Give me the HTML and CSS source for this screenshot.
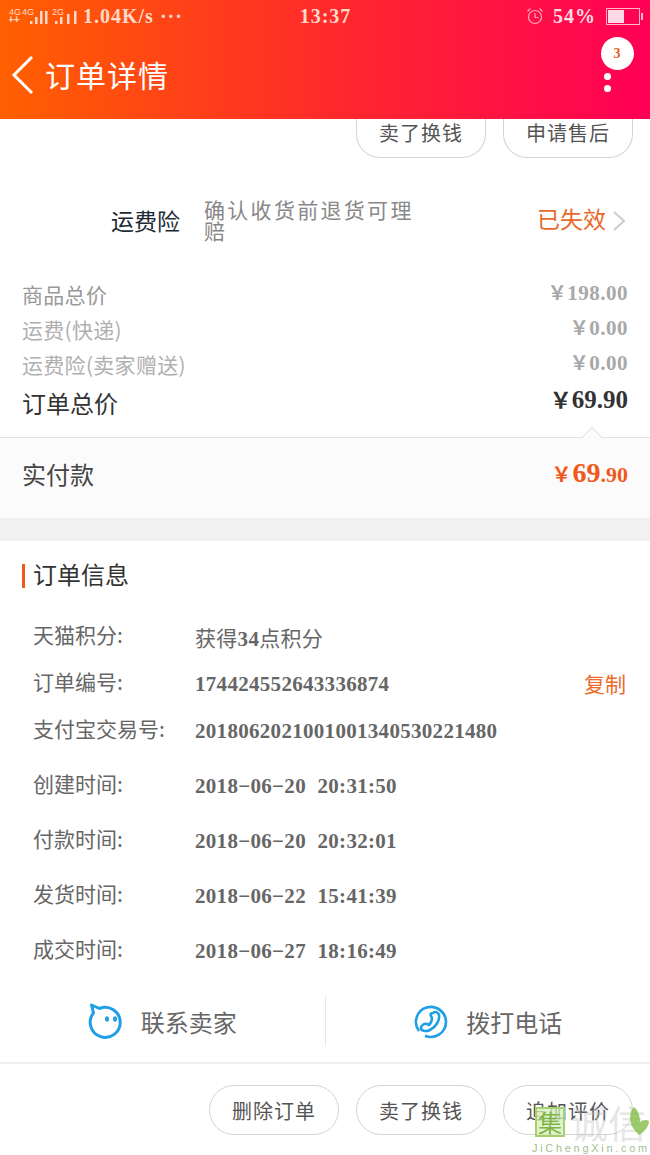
FILE: index.html
```html
<!DOCTYPE html>
<html lang="zh-CN">
<head>
  <meta charset="UTF-8" />
  <meta name="viewport" content="width=device-width, initial-scale=1.0"/>
  <title>订单详情</title>
  <link rel="stylesheet" href="styles.css">
</head>
<body>

  <div class="page">
    <header class="topbar">
      <div class="status">
        <div class="status-left">
          <svg class="signal" width="68" height="24" viewBox="0 0 68 24" fill="#ffd9c9">
            <text x="0" y="10" font-size="9" font-family="Liberation Sans">4G</text>
            <text x="13" y="10" font-size="9" font-family="Liberation Sans">4G</text>
            <text x="-1" y="18" font-size="10" font-weight="bold" font-family="Liberation Sans">++</text>
            <rect x="21" y="16" width="2.500" height="3"/><rect x="26" y="12" width="2.500" height="7"/><rect x="31" y="6" width="2.500" height="13"/><rect x="36" y="6" width="2.500" height="13"/>
            <text x="43" y="10" font-size="9" font-family="Liberation Sans">2G</text>
            <rect x="46" y="16" width="2.500" height="3"/><rect x="51" y="12" width="2.500" height="7"/><rect x="58" y="9" width="2.500" height="10"/><rect x="65" y="6" width="2.500" height="13"/>
          </svg>
          <span class="speed">1.04K/s ···</span>
        </div>
        <span class="clock">13:37</span>
        <div class="status-right">
          <svg width="18" height="18" viewBox="0 0 18 18" fill="none" stroke="#fff" stroke-width="1.200" opacity=".75">
            <circle cx="9" cy="10" r="6.500"/><path d="M9 6v4.500h3.500M1.500 4.500l3-3M16.500 4.500l-3-3"/>
          </svg>
          <span class="pct">54%</span>
          <div class="battery"><div class="battery-fill"></div></div>
        </div>
      </div>
      <div class="navbar">
        <svg class="back" width="24" height="40" viewBox="0 0 24 40" fill="none" stroke="#fff" stroke-width="3">
          <path d="M21 2 3 20l18 18"/>
        </svg>
        <h1>订单详情</h1>
        <div class="more">
          <span class="badge">3</span>
          <i></i><i></i>
        </div>
      </div>
    </header>

    <div class="btn-row btn-row-top">
      <span class="pill">卖了换钱</span>
      <span class="pill">申请售后</span>
    </div>

    <div class="insure">
      <span class="insure-name">运费险</span>
      <span class="insure-desc">确认收货前退货可理赔</span>
      <span class="insure-state">已失效</span>
      <svg width="14" height="24" viewBox="0 0 14 24" fill="none" stroke="#ccc" stroke-width="2"><path d="m2 3 10 9-10 9"/></svg>
    </div>

    <div class="prices">
      <div class="price-row"><span>商品总价</span><b><em>&#xFFE5;</em>198.00</b></div>
      <div class="price-row light"><span>运费(快递)</span><b><em>&#xFFE5;</em>0.00</b></div>
      <div class="price-row light"><span>运费险(卖家赠送)</span><b><em>&#xFFE5;</em>0.00</b></div>
      <div class="price-row total"><span>订单总价</span><b><em>&#xFFE5;</em>69.90</b></div>
    </div>

    <div class="paid">
      <span class="paid-label">实付款</span>
      <b class="paid-sum"><em>&#xFFE5;</em>69<small>.90</small></b>
    </div>

    <div class="gap"></div>

    <section class="info">
      <h2>订单信息</h2>
      <div class="info-row r1"><span class="key">天猫积分:</span><span class="val"><span class="cjk">获得</span>34<span class="cjk">点积分</span></span></div>
      <div class="info-row r2"><span class="key">订单编号:</span><span class="val">174424552643336874</span><span class="copy">复制</span></div>
      <div class="info-row r3"><span class="key">支付宝交易号:</span><span class="val">2018062021001001340530221480</span></div>
      <div class="info-row r4"><span class="key">创建时间:</span><span class="val">2018−06−20 20:31:50</span></div>
      <div class="info-row r4"><span class="key">付款时间:</span><span class="val">2018−06−20 20:32:01</span></div>
      <div class="info-row r4"><span class="key">发货时间:</span><span class="val">2018−06−22 15:41:39</span></div>
      <div class="info-row r4"><span class="key">成交时间:</span><span class="val">2018−06−27 18:16:49</span></div>
    </section>

    <div class="contact">
      <div class="contact-item">
        <svg width="36" height="38" viewBox="0 0 36 38" fill="none" stroke="#1e9fe6" stroke-width="3">
          <path d="M5.500 11 3.500 3l8 3.500A15 15 0 1 1 5.500 11Z" stroke-linejoin="round"/>
          <ellipse cx="19" cy="17" rx="2" ry="2.800" fill="#1e9fe6" stroke="none"/>
          <ellipse cx="27" cy="17" rx="2" ry="2.800" fill="#1e9fe6" stroke="none"/>
        </svg>
        <span>联系卖家</span>
      </div>
      <div class="contact-item">
        <svg width="36" height="38" viewBox="0 0 36 38" fill="none" stroke="#1e9fe6" stroke-width="2.600">
          <path d="M6 29A15 15 0 1 1 12 33.700"/>
          <path d="M20 11c2-2 5-1 6 2 1 5-3 12-9 15-4 2-9 1-9-2 0-3 4-5 6-4l2 1c2-2 3-4 3-7l-1-2c-1-2 0-3 2-3Z"/>
        </svg>
        <span>拨打电话</span>
      </div>
    </div>

    <div class="btn-row btn-row-bottom">
      <span class="pill">删除订单</span>
      <span class="pill">卖了换钱</span>
      <span class="pill">追加评价</span>
    </div>

    <div class="watermark">
      <div class="wm-top">
        <span class="wm-logo">集</span>
        <span class="wm-name">诚信</span>
        <svg class="wm-leaf" width="20" height="30" viewBox="0 0 20 30" fill="#8cc152" opacity=".85">
          <path d="M5 1C0 6 0 15 4 22c2 3 4 5 6 7 5-3 10-8 10-14-3-2-7-1-9 1C11 10 9 4 5 1Z"/>
        </svg>
      </div>
      <span class="wm-url">JiChengXin.com</span>
    </div>
  </div>

</body>
</html>
```

FILE: styles.css
```css
* {
  box-sizing: border-box;
}

body {
  margin: 0;
  background: #fff;
  font-family: "Noto Sans CJK SC", "Liberation Serif", sans-serif;
}

.page {
  position: relative;
  width: 650px;
  height: 1155px;
  overflow: hidden;
}

b, .val, .speed, .clock, .pct {
  font-family: "Liberation Serif", "Noto Sans CJK SC", serif;
  font-weight: bold;
}

em {
  font-style: normal;
}

.cjk {
  font-family: "Noto Sans CJK SC", sans-serif;
  font-weight: normal;
}

.topbar {
  height: 119px;
  background: linear-gradient(to right, #ff6000, #ff2a2a 50%, #ff0055);
  color: #fff;
}

.status {
  height: 32px;
  padding: 0 8px 0 9px;
  display: flex;
  align-items: center;
  justify-content: space-between;
}

.status-left, .status-right {
  width: 240px;
  display: flex;
  align-items: center;
  gap: 6px;
}

.status-right {
  justify-content: flex-end;
  opacity: .85;
}

.speed, .clock, .pct {
  font-size: 20px;
  letter-spacing: 1px;
  color: #ffd9c9;
}

.pct {
  color: #fff;
  margin: 0 4px 0 3px;
}

.signal {
  margin-top: 1px;
}

.battery {
  position: relative;
  width: 34px;
  height: 17px;
  border: 1px solid #ffd5dd;
  padding: 1px;
  margin-right: 2px;
}

.battery::after {
  content: "";
  position: absolute;
  right: -4px;
  top: 4px;
  width: 2px;
  height: 7px;
  background: #ffd5dd;
}

.battery-fill {
  width: 55%;
  height: 100%;
  background: #fff;
}

.navbar {
  height: 87px;
  padding: 0 16px 10px 11px;
  display: flex;
  align-items: center;
}

.back {
  position: relative;
  top: 4px;
}

.navbar h1 {
  margin: 6px 0 0 10px;
  font-size: 30px;
  font-weight: normal;
  letter-spacing: 1px;
}

.more {
  margin-left: auto;
  width: 34px;
  display: flex;
  flex-direction: column;
  align-items: center;
  gap: 5px;
  position: relative;
  top: -6px;
}

.more i {
  width: 7px;
  height: 7px;
  border-radius: 50%;
  background: #fff;
  margin-right: 20px;
}

.badge {
  width: 33px;
  height: 33px;
  border-radius: 50%;
  background: #fff;
  color: #e0601a;
  font: bold 14px/33px "Liberation Serif", serif;
  text-align: center;
  margin-bottom: -2px;
}

.btn-row {
  display: flex;
  justify-content: flex-end;
  gap: 17px;
  padding-right: 17px;
}

.btn-row-top {
  height: 39px;
}

.btn-row-top .pill {
  height: 39px;
  padding-bottom: 11px;
  border-top: 0;
  border-radius: 0 0 24px 24px;
}

.pill {
  width: 130px;
  height: 50px;
  border: 1px solid #d4d4d4;
  border-radius: 25px;
  display: flex;
  align-items: center;
  justify-content: center;
  font-size: 20px;
  color: #555;
  letter-spacing: 1px;
}

.insure {
  margin-top: 34px;
  height: 50px;
  padding: 0 24px 0 111px;
  display: flex;
  align-items: flex-start;
}

.insure-name {
  width: 93px;
  font-size: 23px;
  color: #1c2a33;
  padding-top: 11px;
}

.insure-desc {
  width: 212px;
  font-size: 21px;
  line-height: 21px;
  letter-spacing: 2.300px;
  color: #888;
  margin-top: 7px;
}

.insure-state {
  margin-left: auto;
  font-size: 23px;
  color: #e8692a;
  margin-right: 6px;
  padding-top: 9px;
}

.insure svg {
  margin-top: 17px;
}

.prices {
  margin-top: 34px;
  padding: 0 22px;
}

.price-row {
  height: 35px;
  display: flex;
  justify-content: space-between;
  align-items: center;
  font-size: 21px;
  letter-spacing: .3px;
  color: #999;
}

.price-row.light span {
  color: #b0b0b0;
}

.price-row b {
  color: #a8a8a8;
  font-size: 21px;
  letter-spacing: .5px;
  margin-top: -4px;
}

.price-row em {
  font-size: 19px;
}

.price-row.total {
  font-size: 24px;
  letter-spacing: 0;
  color: #333;
  height: 38px;
  margin-top: 2px;
}

.price-row.total b {
  color: #333;
  font-size: 25px;
  letter-spacing: 0;
  margin-top: -8px;
}

.price-row.total em {
  font-size: 22px;
}

.paid {
  position: relative;
  margin-top: 16px;
  height: 81px;
  padding: 0 22px;
  display: flex;
  align-items: center;
  justify-content: space-between;
  background: #fbfbfb;
  border-top: 1px solid #e2e2e2;
}

.paid::before {
  content: "";
  position: absolute;
  right: 50px;
  top: -8px;
  width: 15px;
  height: 15px;
  background: #fbfbfb;
  border-top: 1px solid #e2e2e2;
  border-left: 1px solid #e2e2e2;
  transform: rotate(45deg);
}

.paid-label {
  font-size: 24px;
  color: #444;
  margin-top: -10px;
}

.paid-sum {
  font-size: 28px;
  color: #f0591b;
  margin-top: -10px;
}

.paid-sum em {
  font-size: 20px;
  margin-right: 1px;
}

.paid-sum small {
  font-size: 22px;
}

.gap {
  height: 23px;
  background: #f1f1f1;
}

.info {
  padding: 23px 24px 0 22px;
}

.info h2 {
  margin: 0 0 27px;
  height: 24px;
  padding-left: 8px;
  font-size: 24px;
  line-height: 20px;
  font-weight: normal;
  color: #333;
  border-left: 3px solid #f0591b;
}

.info-row {
  display: flex;
  align-items: center;
  padding-left: 11px;
}

.r1 { height: 44px; }
.r2 { height: 50px; }
.r3 { height: 44px; margin-bottom: 6px; }
.r4 { height: 55px; }

.key {
  width: 162px;
  font-size: 21px;
  color: #666;
  white-space: nowrap;
  margin-top: -7px;
}

.val {
  font-size: 21px;
  letter-spacing: .3px;
  word-spacing: 6px;
  color: #666;
}

.copy {
  margin: -3px 0 0 auto;
  font-size: 21px;
  color: #ee6a2c;
}

.contact {
  margin-top: 17px;
  height: 68px;
  padding-bottom: 16px;
  display: flex;
  border-bottom: 2px solid #eee;
}

.contact-item {
  flex: 1;
  display: flex;
  align-items: center;
  justify-content: center;
  gap: 17px;
  font-size: 24px;
  color: #666;
}

.contact-item + .contact-item {
  border-left: 1px solid #e8e8e8;
}

.btn-row-bottom {
  padding-top: 21px;
}

.watermark {
  position: absolute;
  right: 0;
  bottom: 0;
  width: 118px;
}

.wm-top {
  position: relative;
  display: flex;
  align-items: center;
  gap: 5px;
  padding-left: 3px;
}

.wm-logo {
  width: 30px;
  height: 30px;
  border: 2px solid #a5d06e;
  background: rgba(216, 238, 187, .75);
  color: #7db548;
  font-size: 24px;
  line-height: 25px;
  text-align: center;
}

.wm-name {
  font-size: 38px;
  line-height: 38px;
  color: rgba(190, 190, 190, .4);
}

.wm-leaf {
  position: absolute;
  right: 1px;
  top: 3px;
}

.wm-url {
  display: block;
  font: 11px/14px "Liberation Sans", sans-serif;
  color: #a4c08f;
  letter-spacing: 2.700px;
}
```
